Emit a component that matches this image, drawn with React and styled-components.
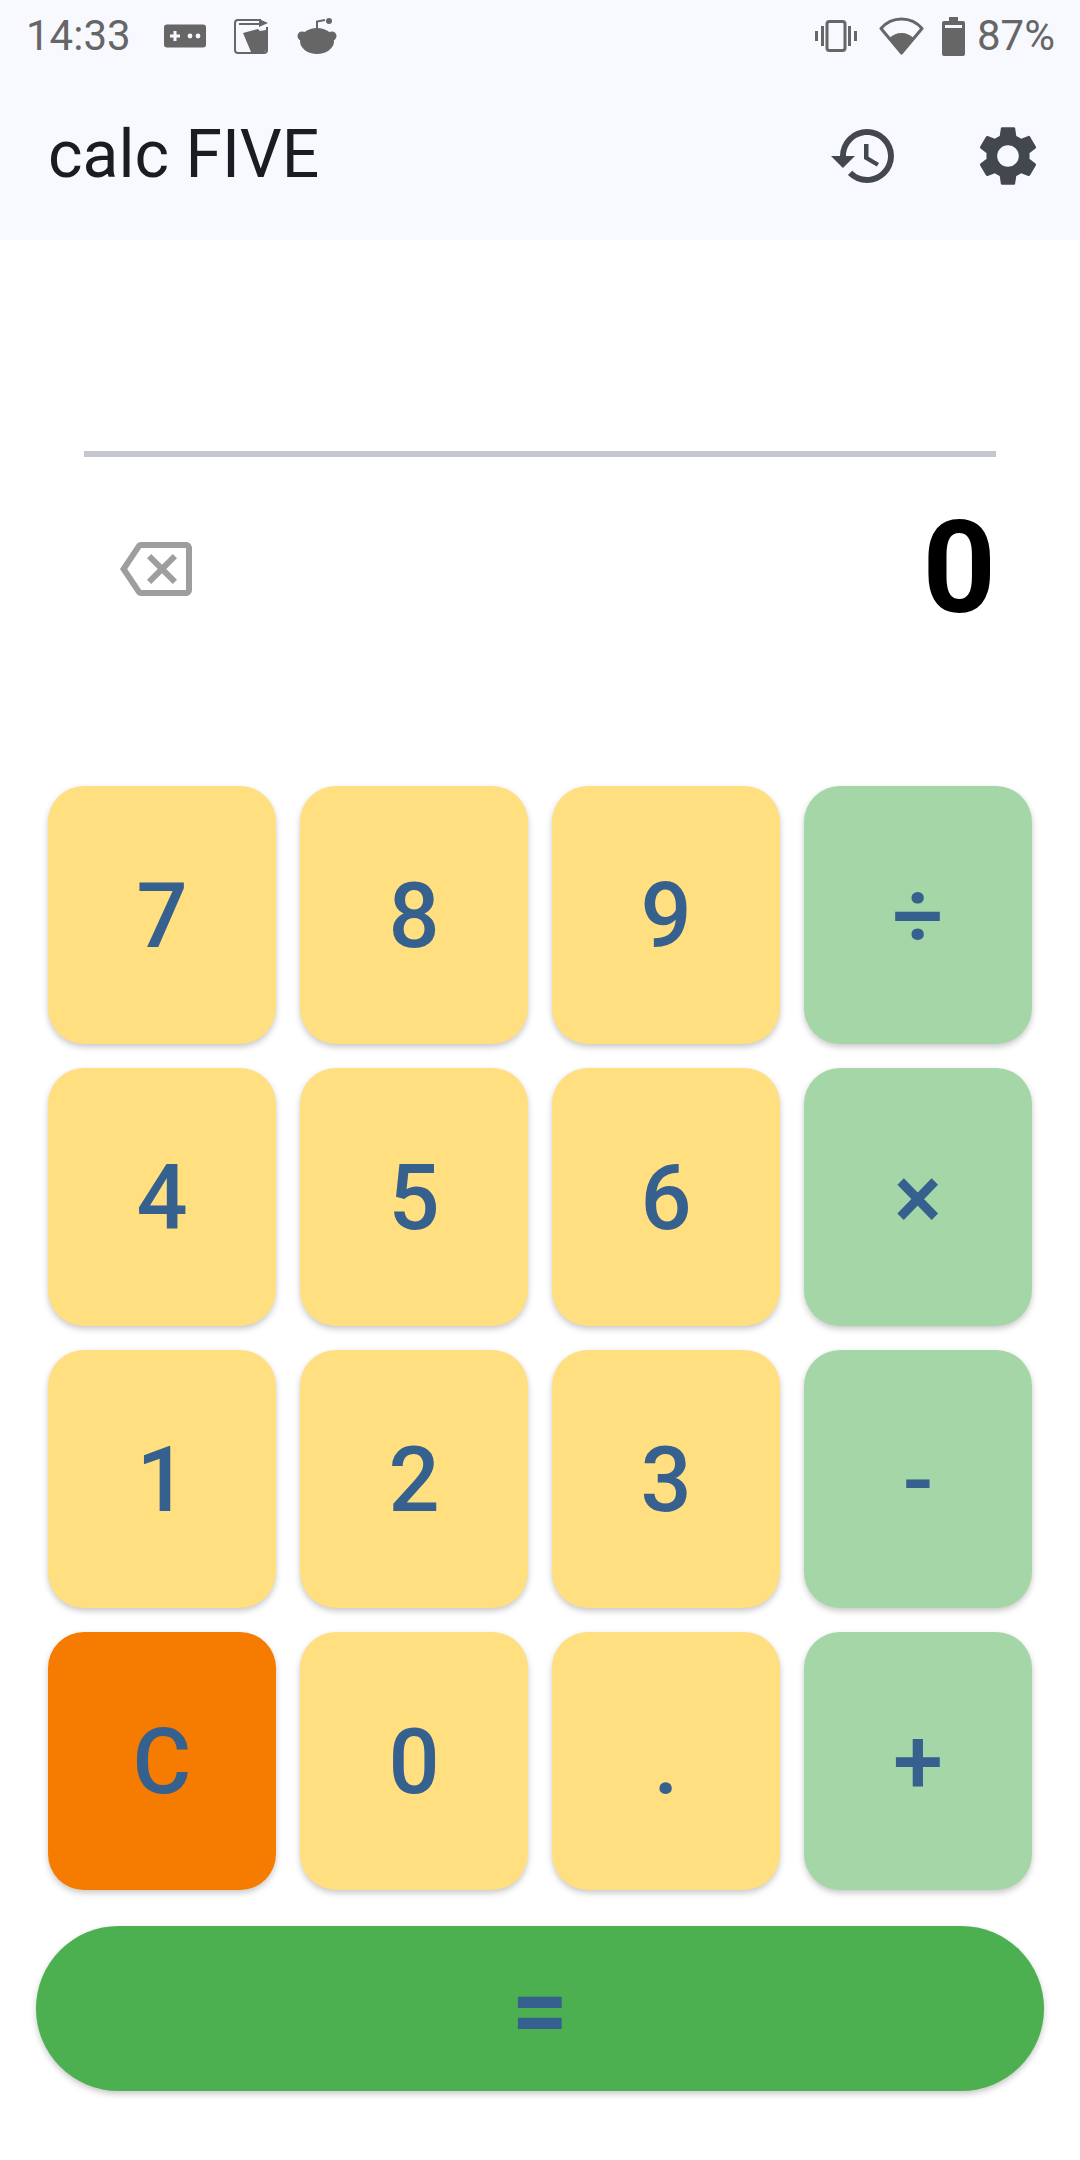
import * as React from 'react';
import styled, { createGlobalStyle } from 'styled-components';
import { MdHistory, MdSettings, MdOutlineBackspace } from 'react-icons/md';

const GlobalStyle = createGlobalStyle`
    html, body {
        margin: 0;
        padding: 0;
        background: #ffffff;
        font-family: Roboto, "Liberation Sans", sans-serif;
    }
`;

const Page = styled.div`
    width: 1080px;
    height: 2160px;
    overflow: hidden;
    display: flex;
    flex-direction: column;
    background: #ffffff;
`;

// Status bar
const StatusBar = styled.div`
    height: 72px;
    display: flex;
    align-items: center;
    padding: 0 25px 0 26px;
    background: #f8f9ff;
    color: #666666;
`;

const StatusText = styled.span`
    font-size: 42px;
    line-height: 72px;
    margin-left: ${props => props.$left || 0}px;
`;

const StatusIcon = styled.svg`
    display: block;
    flex: none;
    margin-left: ${props => props.$left || 0}px;
`;

const Spacer = styled.div`
    flex: 1;
`;

// App bar
const AppBar = styled.div`
    height: 168px;
    display: flex;
    align-items: center;
    padding-left: 48px;
    background: #f8f9ff;
`;

const Title = styled.div`
    flex: 1;
    font-size: 66px;
    line-height: 76px;
    margin-bottom: 3px;
    color: #191c20;
`;

const BarButton = styled.div`
    width: 144px;
    height: 168px;
    display: flex;
    align-items: center;
    justify-content: center;
    font-size: 72px;
    color: #43474e;
`;

// Display
const Divider = styled.div`
    height: 6px;
    margin: 211px 84px 0;
    background: #c4c6d0;
`;

const Display = styled.div`
    height: 224px;
    margin-bottom: 105px;
    display: flex;
    align-items: center;
    justify-content: space-between;
    padding: 0 84px 0 120px;
`;

const Backspace = styled(MdOutlineBackspace)`
    display: block;
    font-size: 72px;
    color: #9e9e9e;
`;

const Result = styled.div`
    margin-bottom: 3px;
    font-size: 128px;
    font-weight: 700;
    color: #000000;
`;

// Keypad
const Keypad = styled.div`
    display: grid;
    grid-template-columns: repeat(4, 228px);
    grid-auto-rows: 258px;
    gap: 24px;
    padding: 0 48px;
`;

const Key = styled.div`
    display: flex;
    align-items: center;
    justify-content: center;
    padding-top: 2px;
    box-sizing: border-box;
    border-radius: 36px;
    background: ${props => props.$color};
    color: #36618e;
    font-size: 90px;
    font-weight: 500;
    box-shadow: 0 3px 6px rgba(0, 0, 0, 0.22);
`;

const EqualsButton = styled.div`
    height: 165px;
    margin: 36px 36px 0;
    display: flex;
    align-items: center;
    justify-content: center;
    padding-top: 4px;
    box-sizing: border-box;
    border-radius: 83px;
    background: #4caf50;
    color: #36618e;
    font-size: 100px;
    font-weight: 700;
    box-shadow: 0 3px 6px rgba(0, 0, 0, 0.22);
`;

const YELLOW = '#ffdf80';
const GREEN = '#a5d6a7';
const ORANGE = '#f57c00';

const keys = [
    ['7', YELLOW], ['8', YELLOW], ['9', YELLOW], ['÷', GREEN],
    ['4', YELLOW], ['5', YELLOW], ['6', YELLOW], ['×', GREEN],
    ['1', YELLOW], ['2', YELLOW], ['3', YELLOW], ['-', GREEN],
    ['C', ORANGE], ['0', YELLOW], ['.', YELLOW], ['+', GREEN],
];

const ICON = '#666666';
const BG = '#f8f9ff';

const GameIcon = () => (
    <StatusIcon $left={33} width="42" height="24" viewBox="0 0 42 24">
        <rect x="0" y="0.5" width="42" height="23" rx="3" fill={ICON} />
        <path d="M9.500 7h3v3.500H16v3h-3.500V17h-3v-3.500H6v-3h3.500z" fill={BG} />
        <circle cx="26" cy="12" r="2.400" fill={BG} />
        <circle cx="34" cy="12" r="2.400" fill={BG} />
    </StatusIcon>
);

const CardIcon = () => (
    <StatusIcon $left={28} width="34" height="36" viewBox="0 0 34 36">
        <path d="M27 2H4a3 3 0 0 0-3 3v27a3 3 0 0 0 3 3h26a3 3 0 0 0 3-3V9" fill="none" stroke={ICON} strokeWidth="2" />
        <path d="M5 5h20V1l9 4-9 4V7H5z" fill={ICON} />
        <path d="M9 15l15-4 2 2 6-1v20a2 2 0 0 1-2 2H17z" fill={ICON} />
    </StatusIcon>
);

const RedditIcon = () => (
    <StatusIcon $left={29} width="40" height="36" viewBox="0 0 40 36">
        <path d="M20 13V3.500L28 2" fill="none" stroke={ICON} strokeWidth="2" />
        <circle cx="32" cy="3" r="3" fill={ICON} />
        <circle cx="5" cy="18" r="4.500" fill={ICON} />
        <circle cx="35" cy="18" r="4.500" fill={ICON} />
        <ellipse cx="20" cy="23" rx="17" ry="13" fill={ICON} />
    </StatusIcon>
);

const VibrateIcon = () => (
    <StatusIcon width="42" height="32" viewBox="0 0 42 32">
        <rect x="12" y="1.500" width="18" height="29" rx="2.500" fill="none" stroke={ICON} strokeWidth="3" />
        <rect x="0" y="11" width="3" height="10" fill={ICON} />
        <rect x="6" y="6" width="3" height="20" fill={ICON} />
        <rect x="33" y="6" width="3" height="20" fill={ICON} />
        <rect x="39" y="11" width="3" height="10" fill={ICON} />
    </StatusIcon>
);

const WifiIcon = () => (
    <StatusIcon $left={22} width="45" height="38" viewBox="0 0 45 38">
        <path d="M22.500 36L2 11.500C7.500 5 14.500 2 22.500 2s15 3 20.500 9.500z" fill="none" stroke={ICON} strokeWidth="3" strokeLinejoin="round" />
        <path d="M22.500 37L10.500 21c3-3 7-5 12-5s9 2 12 5z" fill={ICON} />
    </StatusIcon>
);

const BatteryIcon = () => (
    <StatusIcon $left={18} width="23" height="39" viewBox="0 0 23 39">
        <path d="M7 0h9v4h5a2 2 0 0 1 2 2v31a2 2 0 0 1-2 2H2a2 2 0 0 1-2-2V6a2 2 0 0 1 2-2h5z" fill={ICON} />
        <rect x="3" y="8" width="17" height="3" fill={BG} />
    </StatusIcon>
);

class App extends React.Component {
    render() {
        return (
            <Page>
                <GlobalStyle />

                {/* Status bar */}
                <StatusBar>
                    <StatusText>14:33</StatusText>
                    <GameIcon />
                    <CardIcon />
                    <RedditIcon />
                    <Spacer />
                    <VibrateIcon />
                    <WifiIcon />
                    <BatteryIcon />
                    <StatusText $left={12}>87%</StatusText>
                </StatusBar>

                {/* App bar */}
                <AppBar>
                    <Title>calc FIVE</Title>
                    <BarButton><MdHistory /></BarButton>
                    <BarButton><MdSettings /></BarButton>
                </AppBar>

                {/* Display */}
                <Divider />
                <Display>
                    <Backspace />
                    <Result>0</Result>
                </Display>

                {/* Keypad */}
                <Keypad>
                    {keys.map(([label, color]) => (
                        <Key key={label} $color={color}>{label}</Key>
                    ))}
                </Keypad>
                <EqualsButton>=</EqualsButton>
            </Page>
        );
    }
}

export default App;
